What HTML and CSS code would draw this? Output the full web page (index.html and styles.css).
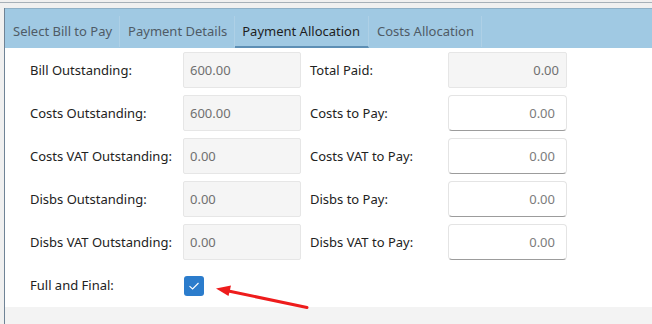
FILE: index.html
```html
<!DOCTYPE html>
<html lang="en">
<head>
    <meta charset="UTF-8">
    <meta name="viewport" content="width=device-width, initial-scale=1.0">
    <title>Payment Allocation</title>
    <link rel="stylesheet" href="styles.css">
</head>
<body>
    <div class="topline"></div>

    <div class="frame">
        <!-- Tab strip -->
        <div class="tabs">
            <div class="tab">Select Bill to Pay</div>
            <div class="tab">Payment Details</div>
            <div class="tab active">Payment Allocation</div>
            <div class="tab">Costs Allocation</div>
        </div>

        <!-- Allocation form -->
        <div class="form">
            <label class="lbl">Bill Outstanding:</label>
            <input class="field readonly" value="600.00" readonly>
            <label class="lbl">Total Paid:</label>
            <input class="field readonly right" value="0.00" readonly>

            <label class="lbl">Costs Outstanding:</label>
            <input class="field readonly" value="600.00" readonly>
            <label class="lbl">Costs to Pay:</label>
            <input class="field edit" value="0.00">

            <label class="lbl">Costs VAT Outstanding:</label>
            <input class="field readonly" value="0.00" readonly>
            <label class="lbl">Costs VAT to Pay:</label>
            <input class="field edit" value="0.00">

            <label class="lbl">Disbs Outstanding:</label>
            <input class="field readonly" value="0.00" readonly>
            <label class="lbl">Disbs to Pay:</label>
            <input class="field edit" value="0.00">

            <label class="lbl">Disbs VAT Outstanding:</label>
            <input class="field readonly" value="0.00" readonly>
            <label class="lbl">Disbs VAT to Pay:</label>
            <input class="field edit" value="0.00">

            <label class="lbl">Full and Final:</label>
            <div class="check-cell">
                <span class="checkbox">
                    <svg width="12" height="10" viewBox="0 0 12 10">
                        <path d="M1.5 5.2 L4.6 8 L10.5 2" fill="none" stroke="#fff" stroke-width="1.1"/>
                    </svg>
                </span>
            </div>
        </div>

        <div class="footer"></div>
    </div>

    <!-- Annotation arrow -->
    <svg class="annot" width="652" height="324" viewBox="0 0 652 324">
        <line x1="307" y1="307.5" x2="226" y2="290.5" stroke="#ee1c1c" stroke-width="3" stroke-linecap="round"/>
        <polygon points="216,288.5 231,285.5 228.5,296" fill="#ee1c1c"/>
    </svg>
</body>
</html>
```

FILE: styles.css
```css
body {
    margin: 0;
    padding: 0;
    background: #f0f0f0;
    font-family: 'Noto Sans', sans-serif;
    font-size: 13px;
    color: #222;
    width: 652px;
    height: 324px;
    overflow: hidden;
    position: relative;
}
.topline {
    height: 1px;
    margin-top: 2px;
    background: #a7b0b8;
}
.frame {
    margin-top: 5px;
    margin-left: 4px;
    border-left: 1px solid #6f8396;
    height: 316px;
    display: flex;
    flex-direction: column;
}

/* Tab strip */
.tabs {
    background: #a0c9e3;
    border-top: 1px solid #8fb0c6;
    height: 39px;
    display: flex;
    align-items: flex-end;
}
.tab {
    height: 31px;
    line-height: 30px;
    padding: 0 7px 0 8px;
    color: #4f5b66;
    border-right: 1px solid #aed0e6;
    box-sizing: border-box;
    margin-bottom: 1px;
}
.tab.active {
    color: #1e1e1e;
    border-bottom: 2px solid #5d8fb5;
    margin-bottom: 0;
    height: 32px;
    padding: 0 8px 0 7px;
}

/* Form grid */
.form {
    background: #fff;
    display: grid;
    grid-template-columns: 153px 118px 147px 119px;
    grid-auto-rows: 36px;
    row-gap: 7px;
    align-items: center;
    padding: 4px 0 4px 25px;
}
.lbl {
    white-space: nowrap;
}
.form .lbl:nth-child(4n+3) {
    padding-left: 9px;
}
.field {
    box-sizing: border-box;
    width: 118px;
    height: 36px;
    margin: 0;
    padding: 0 6px;
    font-family: 'Noto Sans', sans-serif;
    font-size: 13px;
    color: #707070;
    outline: none;
}
.readonly {
    background: #f5f5f5;
    border: 1px solid #e6e6e6;
    border-radius: 2px;
}
.readonly.right {
    width: 119px;
    text-align: right;
    padding-right: 7px;
}
.edit {
    width: 119px;
    background: #fff;
    border: 1px solid #e4e4e4;
    border-bottom-color: #9c9c9c;
    border-radius: 4px;
    text-align: right;
    padding-right: 11px;
    color: #7c7c7c;
}
.check-cell {
    display: flex;
    align-items: center;
    padding-left: 1px;
}
.checkbox {
    width: 20px;
    height: 20px;
    border-radius: 3px;
    background: #2b7ccc;
    display: flex;
    align-items: center;
    justify-content: center;
    margin-top: 1px;
}
.footer {
    flex: 1;
    background: #f3f3f3;
}

/* Red annotation arrow */
.annot {
    position: absolute;
    left: 0;
    top: 0;
    pointer-events: none;
}
```
